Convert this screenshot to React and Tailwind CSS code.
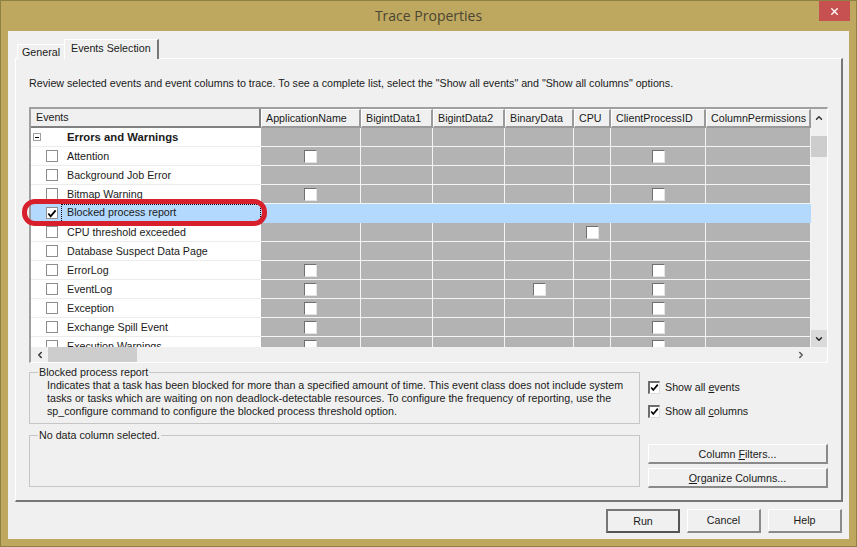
import React from 'react';
import { ChevronUp, ChevronDown, ChevronLeft, ChevronRight, X } from 'lucide-react';

const columns = [
  { name: 'ApplicationName', width: 'w-[100px]', cell: 'w-[100px]' },
  { name: 'BigintData1', width: 'w-[72px]', cell: 'w-[72px]' },
  { name: 'BigintData2', width: 'w-[72px]', cell: 'w-[72px]' },
  { name: 'BinaryData', width: 'w-[69px]', cell: 'w-[69px]' },
  { name: 'CPU', width: 'w-[37px]', cell: 'w-[37px]' },
  { name: 'ClientProcessID', width: 'w-[95px]', cell: 'w-[95px]' },
  { name: 'ColumnPermissions', width: 'w-[105px]', cell: 'w-[105px]' },
];

const rows = [
  { name: 'Attention', checks: ['ApplicationName', 'ClientProcessID'] },
  { name: 'Background Job Error', checks: [] },
  { name: 'Bitmap Warning', checks: ['ApplicationName', 'ClientProcessID'] },
  { name: 'Blocked process report', checks: [], selected: true },
  { name: 'CPU threshold exceeded', checks: ['CPU'] },
  { name: 'Database Suspect Data Page', checks: [] },
  { name: 'ErrorLog', checks: ['ApplicationName', 'ClientProcessID'] },
  { name: 'EventLog', checks: ['ApplicationName', 'BinaryData', 'ClientProcessID'] },
  { name: 'Exception', checks: ['ApplicationName', 'ClientProcessID'] },
  { name: 'Exchange Spill Event', checks: ['ApplicationName', 'ClientProcessID'] },
  { name: 'Execution Warnings', checks: ['ApplicationName', 'ClientProcessID'] },
];

function Tick() {
  return (
    <svg viewBox="0 0 11 11" className="w-[11px] h-[11px]">
      <path d="M1.5 5.5 L4 8.5 L9.5 2" fill="none" stroke="#000" strokeWidth="2" />
    </svg>
  );
}

function EventCheck({ checked }) {
  return (
    <div className="w-[12px] h-[12px] shrink-0 bg-white border border-[#8e8e8e] flex items-center justify-center">
      {checked && <Tick />}
    </div>
  );
}

function CellCheck() {
  return <div className="w-[13px] h-[13px] bg-white border border-t-[#707070] border-l-[#707070] border-r-[#e4e4e4] border-b-[#e4e4e4]" />;
}

function HeaderCell({ col }) {
  return (
    <div className={`${col.width} shrink-0 h-[19px] bg-[#f0f0f0] border-t border-l border-t-white border-l-white border-b-2 border-r-2 border-b-[#9a9a9a] border-r-[#9a9a9a] pl-[4px] leading-[17px] whitespace-nowrap`}>
      {col.name}
    </div>
  );
}

function Row({ row }) {
  return (
    <div className={`flex h-[19px] shrink-0 ${row.selected ? 'bg-[#b3d9ff]' : ''}`}>
      <div className={`w-[230px] shrink-0 flex items-center pl-[15px] border-b ${row.selected ? 'border-[#b3d9ff]' : 'border-[#ececec]'}`}>
        <EventCheck checked={row.selected} />
        <span className={`ml-[3px] h-[19px] flex-1 whitespace-nowrap ${row.selected ? 'border border-dotted border-black leading-[15px] pl-[5px]' : 'pl-[6px] leading-[18px]'}`}>
          {row.name}
        </span>
      </div>
      {columns.map((col) => (
        <div
          key={col.name}
          className={`${col.cell} shrink-0 flex items-center justify-center border-b border-r ${row.selected ? 'border-[#b3d9ff]' : 'bg-[#b3b3b3] border-[#f4f4f4]'}`}
        >
          {!row.selected && row.checks.includes(col.name) && <CellCheck />}
        </div>
      ))}
    </div>
  );
}

function EventsGrid() {
  return (
    <div className="w-[799px] h-[256px] border-t-2 border-l-2 border-r border-b border-t-[#a0a0a0] border-l-[#a0a0a0] border-r-white border-b-white flex flex-col">
      <div className="flex h-[238px]">
        <div className="w-[780px] shrink-0 overflow-hidden flex flex-col bg-white">
          <div className="flex shrink-0">
            <div className="w-[230px] shrink-0 h-[19px] bg-[#f0f0f0] border-b-2 border-r-2 border-[#808080] pl-[5px] leading-[17px]">Events</div>
            {columns.map((col) => <HeaderCell key={col.name} col={col} />)}
          </div>
          <div className="flex h-[19px] shrink-0">
            <div className="w-[230px] shrink-0 flex items-center pl-[2px] border-b border-[#ececec]">
              <div className="w-[8px] h-[8px] border border-[#a0a0a0] flex items-center justify-center">
                <div className="w-[4px] h-px bg-black" />
              </div>
              <span className="ml-[26px] font-bold text-[11.3px]">Errors and Warnings</span>
            </div>
            {columns.map((col) => (
              <div key={col.name} className={`${col.cell} shrink-0 bg-[#b3b3b3] border-b border-r border-[#f4f4f4]`} />
            ))}
          </div>
          {rows.map((row) => <Row key={row.name} row={row} />)}
        </div>
        <div className="w-[16px] shrink-0 flex flex-col bg-[#f0f0f0]">
          <div className="h-[18px] flex items-center justify-center">
            <ChevronUp size={10} strokeWidth={3.5} color="#333" />
          </div>
          <div className="h-[21px] mt-[9px] bg-[#cdcdcd]" />
          <div className="flex-1" />
          <div className="h-[17px] bg-[#dadada] flex items-center justify-center">
            <ChevronDown size={10} strokeWidth={3.5} color="#222" />
          </div>
        </div>
      </div>
      <div className="h-[15px] flex items-center bg-[#f0f0f0]">
        <div className="w-[17px] flex justify-center">
          <ChevronLeft size={10} strokeWidth={3.5} color="#333" />
        </div>
        <div className="w-[89px] h-[15px] bg-[#cdcdcd]" />
        <div className="flex-1" />
        <div className="w-[17px] mr-[18px] flex justify-center">
          <ChevronRight size={10} strokeWidth={3.5} color="#555" />
        </div>
      </div>
    </div>
  );
}

function GroupBox({ title, className, children }) {
  return (
    <div className={`relative w-[611px] border border-[#c6c6c6] ${className}`}>
      <span className="absolute left-[8px] -top-[8px] bg-[#f0f0f0] px-px leading-[14px]">{title}</span>
      {children}
    </div>
  );
}

function ShowCheck({ children, className }) {
  return (
    <div className={`flex items-center ${className}`}>
      <div className="w-[12px] h-[13px] bg-white border-t-2 border-l-2 border-[#6d6d6d] border-r border-b border-r-[#dedede] border-b-[#dedede] flex items-center justify-center">
        <Tick />
      </div>
      <span className="ml-[5px] leading-[14px]">{children}</span>
    </div>
  );
}

function Button({ children, className, primary }) {
  return (
    <div className={`flex items-center justify-center bg-[#f0f0f0] ${primary ? 'border-2 border-t-[#777] border-l-[#777] border-r-[#555] border-b-[#555]' : 'border border-t-white border-l-white border-r-2 border-b-2 border-r-[#8a8a8a] border-b-[#8a8a8a]'} ${className}`}>
      <span>{children}</span>
    </div>
  );
}

export default function App() {
  return (
    <div className="relative w-[857px] h-[547px] overflow-hidden bg-[#bea85f] border border-[#8f8146] flex flex-col font-['Liberation_Sans',sans-serif] text-[10.7px] text-[#1a1a1a]">
      <div className="h-[30px] shrink-0 grid grid-cols-[1fr_auto_1fr]">
        <div />
        <div className="text-[14px] leading-[30px] text-[#4b4533] font-['Open_Sans',sans-serif]">Trace Properties</div>
        <div className="justify-self-end mr-[6px] w-[31px] h-[20px] bg-[#c75050] flex items-center justify-center">
          <X size={11} strokeWidth={3} color="#fff" />
        </div>
      </div>

      <div className="mx-[7px] h-[508px] bg-[#f0f0f0] pl-[7px] pr-[6px] pt-[8px] flex flex-col">
        <div className="flex items-end h-[20px] pl-[2px] -mb-px relative">
          <div className="w-[47px] h-[15px] bg-[#f0f0f0] border-t border-l border-white border-r-0 pl-[4px] leading-[14px]">General</div>
          <div className="w-[95px] h-[20px] bg-[#f0f0f0] border-t border-l border-t-white border-l-white border-r-2 border-r-[#777] pl-[6px] leading-[16px] relative z-10">Events Selection</div>
        </div>
        <div className="w-[828px] h-[444px] border-t border-l border-t-white border-l-white border-r-2 border-b-2 border-r-[#777] border-b-[#777] pl-[13px] flex flex-col">
          <div className="h-[48px] pt-[17px] leading-[14px] whitespace-nowrap">
            Review selected events and event columns to trace. To see a complete list, select the "Show all events" and "Show all columns" options.
          </div>
          <EventsGrid />
          <div className="flex mt-[9px]">
            <div className="flex flex-col">
              <GroupBox title="Blocked process report" className="h-[52px]">
                <p className="pl-[17px] pr-[4px] pt-[6px] leading-[13px] whitespace-nowrap">
                  Indicates that a task has been blocked for more than a specified amount of time. This event class does not include system<br />
                  tasks or tasks which are waiting on non deadlock-detectable resources. To configure the frequency of reporting, use the<br />
                  sp_configure command to configure the blocked process threshold option.
                </p>
              </GroupBox>
              <GroupBox title="No data column selected." className="h-[52px] mt-[11px]" />
            </div>
            <div className="ml-[8px] w-[180px] flex flex-col">
              <ShowCheck className="mt-[8px]">Show all <u>e</u>vents</ShowCheck>
              <ShowCheck className="mt-[10px]">Show all <u>c</u>olumns</ShowCheck>
              <Button className="h-[20px] mt-[26px] pt-px">Column <u>F</u>ilters...</Button>
              <Button className="h-[20px] mt-[4px] pt-px"><u>O</u>rganize Columns...</Button>
            </div>
          </div>
        </div>
        <div className="flex justify-end gap-[7px] mt-[7px] mr-[1px]">
          <Button primary className="w-[74px] h-[24px]">Run</Button>
          <Button className="w-[74px] h-[24px]">Cancel</Button>
          <Button className="w-[74px] h-[24px]">Help</Button>
        </div>
      </div>

      <div className="absolute left-[21px] top-[198px] w-[245px] h-[27px] rounded-[13px] border-[5px] border-[#d7202c]" />
    </div>
  );
}
